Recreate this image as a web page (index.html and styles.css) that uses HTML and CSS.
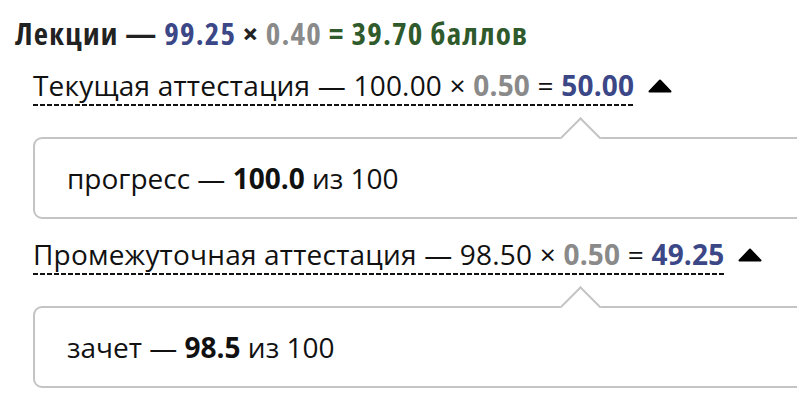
FILE: index.html
```html
<!DOCTYPE html>
<html lang="ru">
<head>
<meta charset="utf-8">
<link rel="stylesheet" href="styles.css">
</head>
<body>
<div class="page">
  <h2 class="total">Лекции — <span class="val">99.25</span> × <span class="wt">0.40</span> <span class="res">= 39.70 баллов</span></h2>

  <div class="item">
    <div class="row">
      <span class="title">Текущая аттестация — 100.00 × <b class="wt">0.50</b> = <b class="val">50.00</b></span>
      <svg class="caret" width="24" height="14" viewBox="0 0 24 14"><polygon points="12,1.5 22.5,12.5 1.5,12.5" fill="#000" stroke="#000" stroke-width="2" stroke-linejoin="round"/></svg>
    </div>
    <div class="pop"><span>прогресс — <b>100.0</b> из 100</span></div>
  </div>

  <div class="item">
    <div class="row">
      <span class="title">Промежуточная аттестация — 98.50 × <b class="wt">0.50</b> = <b class="val">49.25</b></span>
      <svg class="caret" width="24" height="14" viewBox="0 0 24 14"><polygon points="12,1.5 22.5,12.5 1.5,12.5" fill="#000" stroke="#000" stroke-width="2" stroke-linejoin="round"/></svg>
    </div>
    <div class="pop"><span>зачет — <b>98.5</b> из 100</span></div>
  </div>
</div>
</body>
</html>
```

FILE: styles.css
```css
html, body {
  margin: 0;
  padding: 0;
  background: #fff;
  overflow: hidden;
}
body {
  font-family: "Open Sans", "Noto Sans", sans-serif;
  color: #111;
}
.page {
  padding: 13px 0 0 15px;
}
.total {
  margin: 0;
  font-size: 31px;
  line-height: 40px;
  font-weight: 700;
  font-stretch: 75%;
  letter-spacing: 1.2px;
  color: #222;
  white-space: nowrap;
}
.total .val { color: #3b4787; }
.total .wt { color: #8a8a8a; }
.total .res { color: #2f5a2c; }

.item {
  margin-left: 18px;
}
.item + .item {
  margin-top: 17px;
}
.row {
  display: flex;
  align-items: flex-start;
  margin-top: 14px;
  white-space: nowrap;
}
.title {
  font-size: 28px;
  line-height: 36px;
  letter-spacing: 0.2px;
  padding-bottom: 3px;
  background: repeating-linear-gradient(90deg, #111 0 5px, transparent 5px 7px) left bottom / 100% 2px no-repeat;
}
.title b { font-weight: 700; }
.title .wt { color: #8a8a8a; }
.title .val { color: #3b4787; }
.caret {
  margin: 12px 0 0 14px;
}
.pop {
  position: relative;
  margin-top: 31px;
  width: 800px;
  border: 2px solid #c4c4c4;
  border-radius: 9px;
  padding: 21px 32px;
  font-size: 28px;
  line-height: 36px;
  white-space: nowrap;
}
.pop b { font-weight: 700; }
.pop::before {
  content: "";
  position: absolute;
  left: 531px;
  top: -16px;
  width: 27px;
  height: 27px;
  background: #fff;
  border-top: 2px solid #c4c4c4;
  border-left: 2px solid #c4c4c4;
  transform: rotate(45deg);
}
```
